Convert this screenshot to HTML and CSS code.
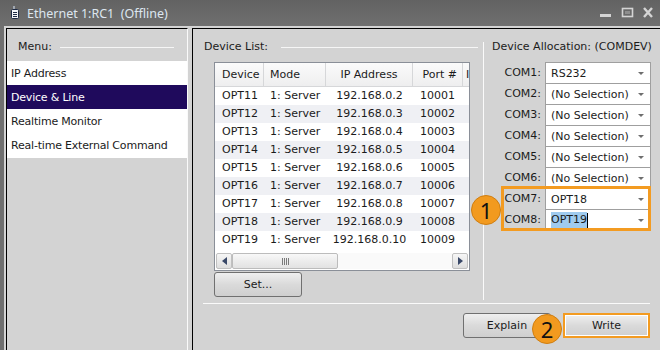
FILE: index.html
```html
<!DOCTYPE html>
<html lang="en">
<head>
  <meta charset="UTF-8">
  <title>Ethernet 1:RC1 (Offline)</title>
  <link rel="stylesheet" href="styles.css">
</head>
<body>

<div class="window">
  <!-- Title bar -->
  <div class="titlebar">
    <svg class="app-icon" width="10" height="14" viewBox="0 0 10 14">
      <path d="M4 1 L4 4" stroke="#c8d4e4" stroke-width="1.2" fill="none"/>
      <rect x="1.5" y="4.5" width="7" height="9" rx="1" fill="#f4f6fa" stroke="#1e2a44"/>
      <path d="M3 7.5 H7 M3 9.5 H7 M3 11.5 H7" stroke="#1e2a44" stroke-width="1"/>
    </svg>
    <span class="title">Ethernet 1:RC1&nbsp; (Offline)</span>
    <div class="win-controls">
      <svg width="60" height="14" viewBox="0 0 60 14">
        <rect x="4" y="8" width="11" height="3" fill="#d4d4d4"/>
        <rect x="26.5" y="2.5" width="10" height="8" fill="none" stroke="#d4d4d4" stroke-width="1.6"/>
        <rect x="29" y="5" width="5" height="3" fill="#d4d4d4" opacity="0.35"/>
        <path d="M48 2 L56 11 M56 2 L48 11" stroke="#d4d4d4" stroke-width="2.4"/>
      </svg>
    </div>
  </div>

  <div class="client">
    <!-- Left menu -->
    <div class="menu-panel">
      <div class="group-head menu-head"><span>Menu:</span><span class="rule"></span></div>
      <ul class="menu-list">
        <li>IP Address</li>
        <li class="active">Device &amp; Line</li>
        <li>Realtime Monitor</li>
        <li>Real-time External Command</li>
      </ul>
    </div>

    <!-- Main area -->
    <div class="main-panel">
      <div class="main-top">
        <div class="list-group">
          <div class="group-head list-head"><span>Device List:</span><span class="rule"></span></div>
          <div class="grid">
            <div class="grid-head">
              <div class="c c-dev">Device</div>
              <div class="c c-mode">Mode</div>
              <div class="c c-ip">IP Address</div>
              <div class="c c-port">Port #</div>
              <div class="c c-more">Interface</div>
            </div>
            <div class="grid-body" id="gridBody"></div>
            <div class="grid-gap"></div>
            <div class="hscroll">
              <div class="sb-btn"><span class="arrow-left"></span></div>
              <div class="sb-thumb"><span class="grip"></span></div>
              <div class="sb-track"></div>
              <div class="sb-btn"><span class="arrow-right"></span></div>
            </div>
          </div>
          <button class="btn set-btn">Set...</button>
        </div>

        <div class="alloc-group">
          <div class="group-head alloc-head"><span>Device Allocation: (COMDEV)</span></div>
          <div class="com-list" id="comList"></div>
          <div class="mark-box"></div>
          <div class="badge badge-one">1</div>
        </div>
      </div>

      <div class="foot-rule"></div>
      <div class="main-foot">
        <button class="btn explain-btn">Explain</button>
        <span class="write-wrap">
          <button class="btn write-btn">Write</button>
          <span class="badge badge-two">2</span>
        </span>
      </div>
    </div>
  </div>
</div>

<script>
  const devices = [];
  for (let i = 0; i < 9; i++) {
    devices.push({ name: `OPT${11 + i}`, mode: "1: Server", ip: `192.168.0.${2 + i}`, port: 10001 + i });
  }

  document.getElementById("gridBody").innerHTML = devices.map(d => `
    <div class="grid-row">
      <div class="c c-dev">${d.name}</div>
      <div class="c c-mode">${d.mode}</div>
      <div class="c c-ip">${d.ip}</div>
      <div class="c c-port">${d.port}</div>
      <div class="c c-more"></div>
    </div>`).join("");

  const coms = ["RS232", "(No Selection)", "(No Selection)", "(No Selection)",
    "(No Selection)", "(No Selection)", "OPT18", "OPT19"];

  document.getElementById("comList").innerHTML = coms.map((v, i) => {
    const text = i === 7 ? `<span class="sel-text">${v}</span><span class="caret"></span>` : v;
    return `
    <div class="com-row">
      <span class="com-label">COM${i + 1}:</span>
      <div class="combo"><span class="combo-val">${text}</span><span class="combo-arrow"></span></div>
    </div>`;
  }).join("");
</script>

</body>
</html>
```

FILE: styles.css
```css
* { box-sizing: border-box; }

body {
  margin: 0;
  font-family: "DejaVu Sans", Verdana, sans-serif;
  font-size: 11px;
  color: #1b1b1b;
  background: #6d6d6d;
}

.window {
  width: 660px;
  height: 350px;
  display: flex;
  flex-direction: column;
  background: linear-gradient(#626262, #6f6f6f 26px, #6f6f6f);
  overflow: hidden;
}

/* Title bar */
.titlebar {
  height: 26px;
  display: flex;
  align-items: center;
  padding-left: 10px;
}

.app-icon { margin-top: -3px; }

.title {
  margin-left: 7px;
  margin-top: 1px;
  font-family: "Noto Sans", "Open Sans", sans-serif;
  font-size: 12.5px;
  color: #dde6ef;
}

.win-controls {
  margin-left: auto;
  margin-right: 4px;
  display: flex;
}

/* Client area */
.client {
  flex: 1;
  display: flex;
  gap: 4px;
  margin-left: 4px;
  padding: 2px 0 0 2px;
  background: #d3d3d3;
}

.group-head {
  display: flex;
  align-items: center;
  height: 14px;
  line-height: 14px;
  white-space: nowrap;
}

.rule {
  flex: 1;
  height: 1px;
  background: #f6f6f6;
}

/* Menu */
.menu-panel {
  width: 182px;
  border-left: 1px solid #000;
  border-top: 1px solid #000;
  border-right: 1px solid #fafafa;
}

.menu-head {
  margin: 11px 0 7px 0;
  padding-left: 11px;
}

.menu-head .rule { margin: 0 13px 0 8px; }

.menu-list {
  list-style: none;
  margin: 0;
  padding: 0;
  background: #fff;
}

.menu-list li {
  height: 24px;
  line-height: 25px;
  padding-left: 4px;
  white-space: nowrap;
  letter-spacing: -0.2px;
}

.menu-list li:last-child { height: 25px; }

.menu-list li.active {
  background: #1f0a5c;
  color: #fff;
}

/* Main panel */
.main-panel {
  flex: 1;
  border-left: 1px solid #000;
  border-top: 1px solid #000;
  display: flex;
  flex-direction: column;
}

.main-top {
  height: 271px;
  display: flex;
}

.list-group {
  width: 290px;
  padding-left: 11px;
}

.list-head { margin-top: 11px; }
.list-head .rule { margin: 0 5px 0 13px; }

/* Device table */
.grid {
  margin: 8px 0 0 10px;
  width: 256px;
  height: 209px;
  border: 1px solid #8a8f98;
  background: #fff;
  display: flex;
  flex-direction: column;
}

.grid-head, .grid-row {
  display: flex;
  white-space: nowrap;
}

.grid-head {
  height: 24px;
  line-height: 23px;
  background: linear-gradient(#fbfbfb, #eeeeef);
  border-bottom: 1px solid #d6d7d9;
}

.grid-head .c { border-right: 1px solid #d6d7d9; }

.c { overflow: hidden; }
.c-dev { width: 49px; padding-left: 7px; }
.c-mode { width: 62px; padding-left: 6px; }
.c-ip { width: 87px; text-align: center; }
.c-port { width: 50px; padding-left: 7px; }
.c-more { flex: 1; padding-left: 3px; }
.grid-head .c-port { text-align: right; padding-right: 5px; }
.grid-head .c-more { border-right: none; }

.grid-row {
  height: 18px;
  line-height: 18px;
}

.grid-row:nth-child(even) { background: #eff0f4; }

.grid-gap { flex: 1; }

.hscroll {
  height: 16px;
  margin-bottom: 1px;
  padding: 0 1px;
  display: flex;
}

.sb-btn {
  width: 16px;
  border: 1px solid #c0c0c0;
  border-radius: 2px;
  background: linear-gradient(#f6f6f6, #dedede);
  display: flex;
  align-items: center;
  justify-content: center;
}

.arrow-left, .arrow-right {
  width: 0;
  height: 0;
  border-top: 4px solid transparent;
  border-bottom: 4px solid transparent;
}

.arrow-left { border-right: 5px solid #394868; }
.arrow-right { border-left: 5px solid #394868; }

.sb-thumb {
  width: 106px;
  border: 1px solid #bcbcbc;
  border-radius: 2px;
  background: linear-gradient(#f8f8f8, #e2e2e2);
  display: flex;
  align-items: center;
  justify-content: center;
}

.grip {
  width: 7px;
  height: 7px;
  background: repeating-linear-gradient(90deg, #7a7a7a 0 1px, transparent 1px 2px);
}

.sb-track { flex: 1; background: #fafafa; }

/* Buttons */
.btn {
  font-family: inherit;
  font-size: 11px;
  color: #1b1b1b;
  height: 25px;
  border: 1px solid #707070;
  border-radius: 3px;
  background: linear-gradient(#efefef, #dadada 50%, #cfcfcf);
  padding: 0;
}

.set-btn {
  display: block;
  width: 88px;
  margin: 1px 0 0 10px;
}

/* Allocation */
.alloc-group {
  position: relative;
  flex: 1;
  margin-top: 13px;
  height: 258px;
  border-left: 1px solid #fafafa;
  padding-left: 8px;
}

.alloc-head { margin-top: -2px; }

.com-list { margin-top: 8px; }

.com-row {
  display: flex;
  align-items: flex-start;
  height: 21px;
}

.com-label {
  flex: 0 0 53px;
  padding-right: 4px;
  text-align: right;
  line-height: 22px;
  white-space: nowrap;
}

.combo {
  width: 106px;
  height: 22px;
  border: 1px solid #9f9f9f;
  background: #fff;
  display: flex;
  align-items: center;
  padding-left: 5px;
}

.combo-val {
  flex: 1;
  white-space: nowrap;
  display: flex;
  align-items: center;
}

.combo-arrow {
  width: 0;
  height: 0;
  margin-right: 6px;
  border-left: 3px solid transparent;
  border-right: 3px solid transparent;
  border-top: 3px solid #6e6e6e;
}

.sel-text {
  background: #9fcbef;
  line-height: 16px;
}

.caret {
  width: 1px;
  height: 15px;
  background: #000;
}

.mark-box {
  position: absolute;
  left: 17px;
  top: 144px;
  width: 150px;
  height: 45px;
  border: 3px solid #f39b21;
}

.badge {
  position: absolute;
  width: 30px;
  height: 30px;
  border-radius: 50%;
  background: #f29a1f;
  border: 1px solid #d07e10;
  color: #111;
  font-family: "Noto Sans", "Open Sans", sans-serif;
  font-size: 22px;
  line-height: 28px;
  text-align: center;
}

.badge-one { left: -13px; top: 153px; }

/* Footer */
.foot-rule {
  height: 1px;
  margin: 3px 10px 0 10px;
  background: #fafafa;
}

.main-foot {
  display: flex;
  justify-content: flex-end;
  gap: 12px;
  padding: 9px 10px 0 0;
}

.explain-btn { width: 88px; }

.write-wrap { position: relative; }

.write-btn {
  width: 87px;
  border: 2px solid #f39b21;
  border-radius: 0;
  box-shadow: inset 0 0 0 1px #fff;
}

.badge-two { left: -31px; top: 1px; }
```
